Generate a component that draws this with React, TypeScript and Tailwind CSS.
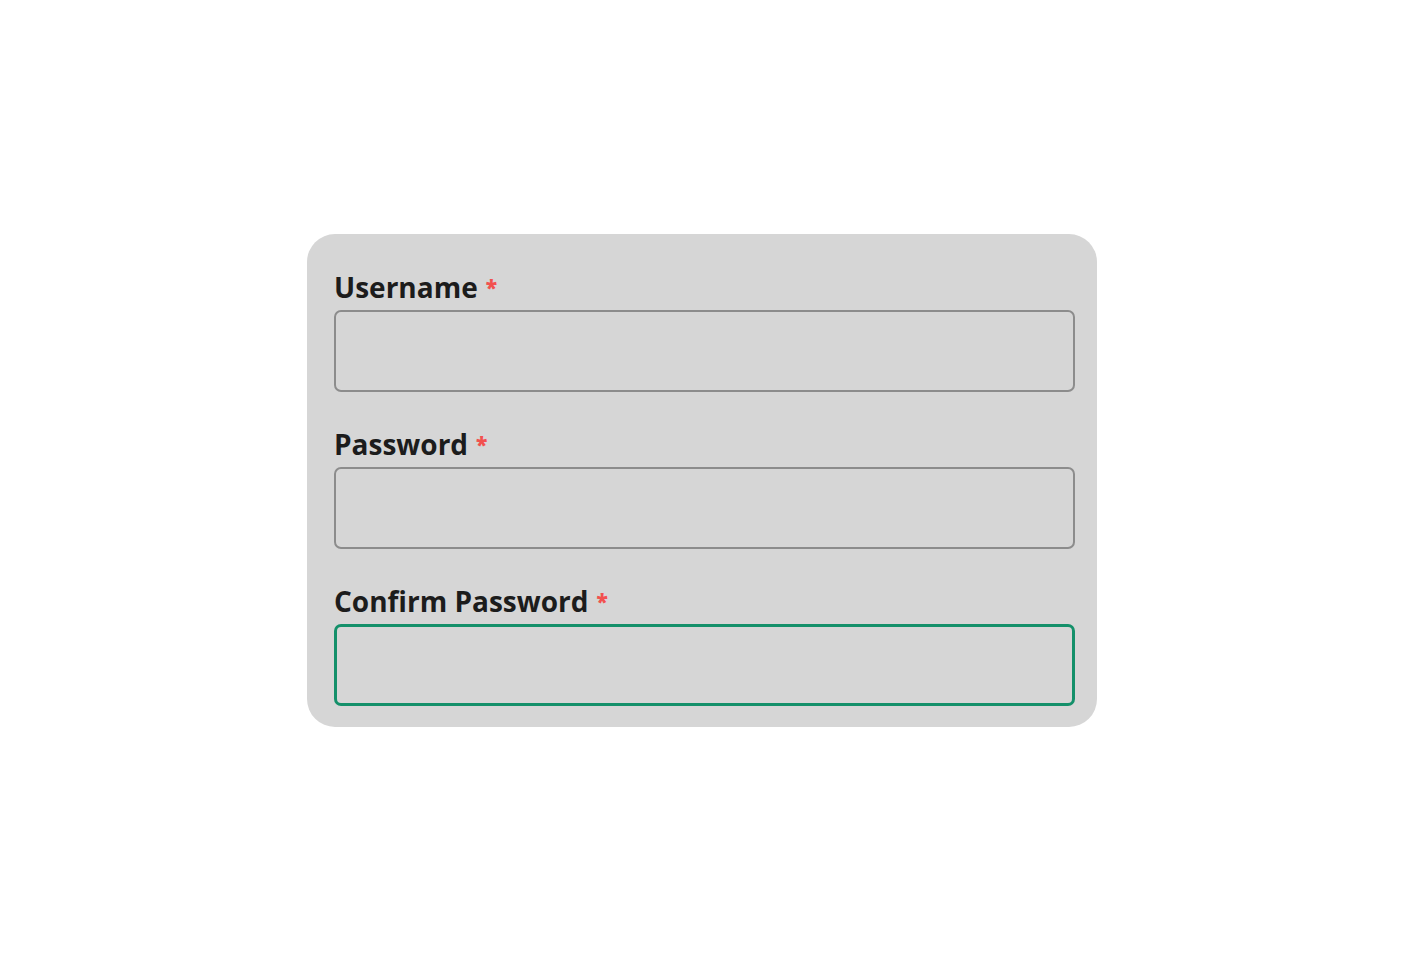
import React from "react";

function Field({ label, focused }: { label: string; focused?: boolean }) {
  return (
    <div className="flex flex-col">
      <label className="flex items-start h-[34px] leading-[34px] text-[28px] font-bold text-[#1c1c1c]" style={{ fontFamily: '"Open Sans", "Liberation Sans", sans-serif' }}>
        <span>{label}</span>
        <span className="ml-[8px] mt-[4px] text-[21px] leading-[26px] font-extrabold text-[#f2514f]">*</span>
      </label>
      <input
        type="text"
        className={
          focused
            ? "mt-[6px] w-[741px] h-[82px] rounded-[7px] border-[3px] border-[#14906a] bg-[#d6d6d6] outline-none"
            : "mt-[6px] w-[741px] h-[82px] rounded-[7px] border-2 border-[#8c8c8c] bg-[#d6d6d6] outline-none"
        }
      />
    </div>
  );
}

export default function App() {
  return (
    <div className="min-h-screen w-full bg-white flex items-center justify-center">
      <div className="w-[790px] h-[493px] rounded-[28px] bg-[#d6d6d6] pl-[27px] pt-[36px] flex flex-col gap-[35px]">
        <Field label="Username" />
        <Field label="Password" />
        <Field label="Confirm Password" focused />
      </div>
    </div>
  );
}
